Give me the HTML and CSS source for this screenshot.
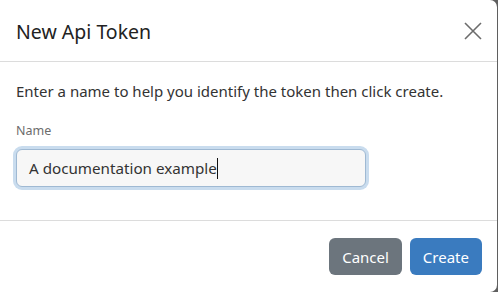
FILE: index.html
```html
<!DOCTYPE html>
<html lang="en">

<head>
    <meta charset="UTF-8" />
    <meta name="viewport" content="width=device-width, initial-scale=1.0" />
    <title>New Api Token</title>
    <link rel="stylesheet" href="styles.css">
</head>

<body>
    <div class="modal">
        <div class="modal-header">
            <h1 class="modal-title">New Api Token</h1>
            <button class="close" type="button" aria-label="Close">
                <svg width="18" height="18" viewBox="0 0 18 18">
                    <path d="M1 1 L17 17 M17 1 L1 17" stroke="#6c6c6c" stroke-width="1.6" fill="none" />
                </svg>
            </button>
        </div>
        <div class="modal-body">
            <p class="intro">Enter a name to help you identify the token then click create.</p>
            <label for="tokenName" class="label">Name</label>
            <div class="field">
                <span class="field-text">A documentation example</span><span class="caret"></span>
            </div>
        </div>
        <div class="modal-footer">
            <button class="btn btn-cancel" type="button">Cancel</button>
            <button class="btn btn-create" type="button">Create</button>
        </div>
    </div>
</body>

</html>
```
FILE: styles.css
```css
html {
    background-color: #5f5f5f;
}

body {
    margin: 0;
    font-family: "Noto Sans", "Open Sans", sans-serif;
    color: #212529;
}

.modal {
    background-color: #fff;
    width: 497px;
    height: 292px;
    border-top-right-radius: 7px;
    border-bottom-right-radius: 7px;
    display: flex;
    flex-direction: column;
}

.modal-header {
    height: 62px;
    box-sizing: border-box;
    padding: 1px 16px 0;
    display: flex;
    align-items: center;
    justify-content: space-between;
    border-bottom: 1px solid #dcdcdc;
}

.modal-title {
    margin: 0;
    font-size: 19.5px;
    font-weight: 400;
    color: #222;
}

.close {
    background: none;
    border: none;
    padding: 0;
    margin-right: -1px;
    display: flex;
}

.modal-body {
    padding: 17px 16px 0;
    height: 159px;
    box-sizing: border-box;
    border-bottom: 1px solid #dcdcdc;
}

.intro {
    margin: 0;
    font-size: 15px;
    line-height: 24px;
    color: #333;
}

.label {
    display: block;
    margin-top: 19px;
    font-size: 12.5px;
    line-height: 17px;
    color: #6c6c6c;
}

.field {
    margin-top: 10px;
    width: 350px;
    height: 38px;
    box-sizing: border-box;
    border: 1px solid #9fb9d3;
    border-radius: 6px;
    background-color: #f7f7f7;
    box-shadow: 0 0 0 3px #c9dcee;
    display: flex;
    align-items: center;
    padding-left: 12px;
}

.field-text {
    font-size: 15.2px;
    color: #333;
}

.caret {
    width: 1px;
    height: 21px;
    background-color: #111;
}

.modal-footer {
    flex: 1;
    display: flex;
    justify-content: flex-end;
    align-items: center;
    gap: 8px;
    padding: 0 15px 0 0;
}

.btn {
    height: 37px;
    border: none;
    border-radius: 6px;
    color: #fff;
    font-family: inherit;
    font-size: 15px;
    padding: 0 13px;
}

.btn-cancel {
    background-color: #6c757d;
}

.btn-create {
    background-color: #3a7bbf;
}
```
